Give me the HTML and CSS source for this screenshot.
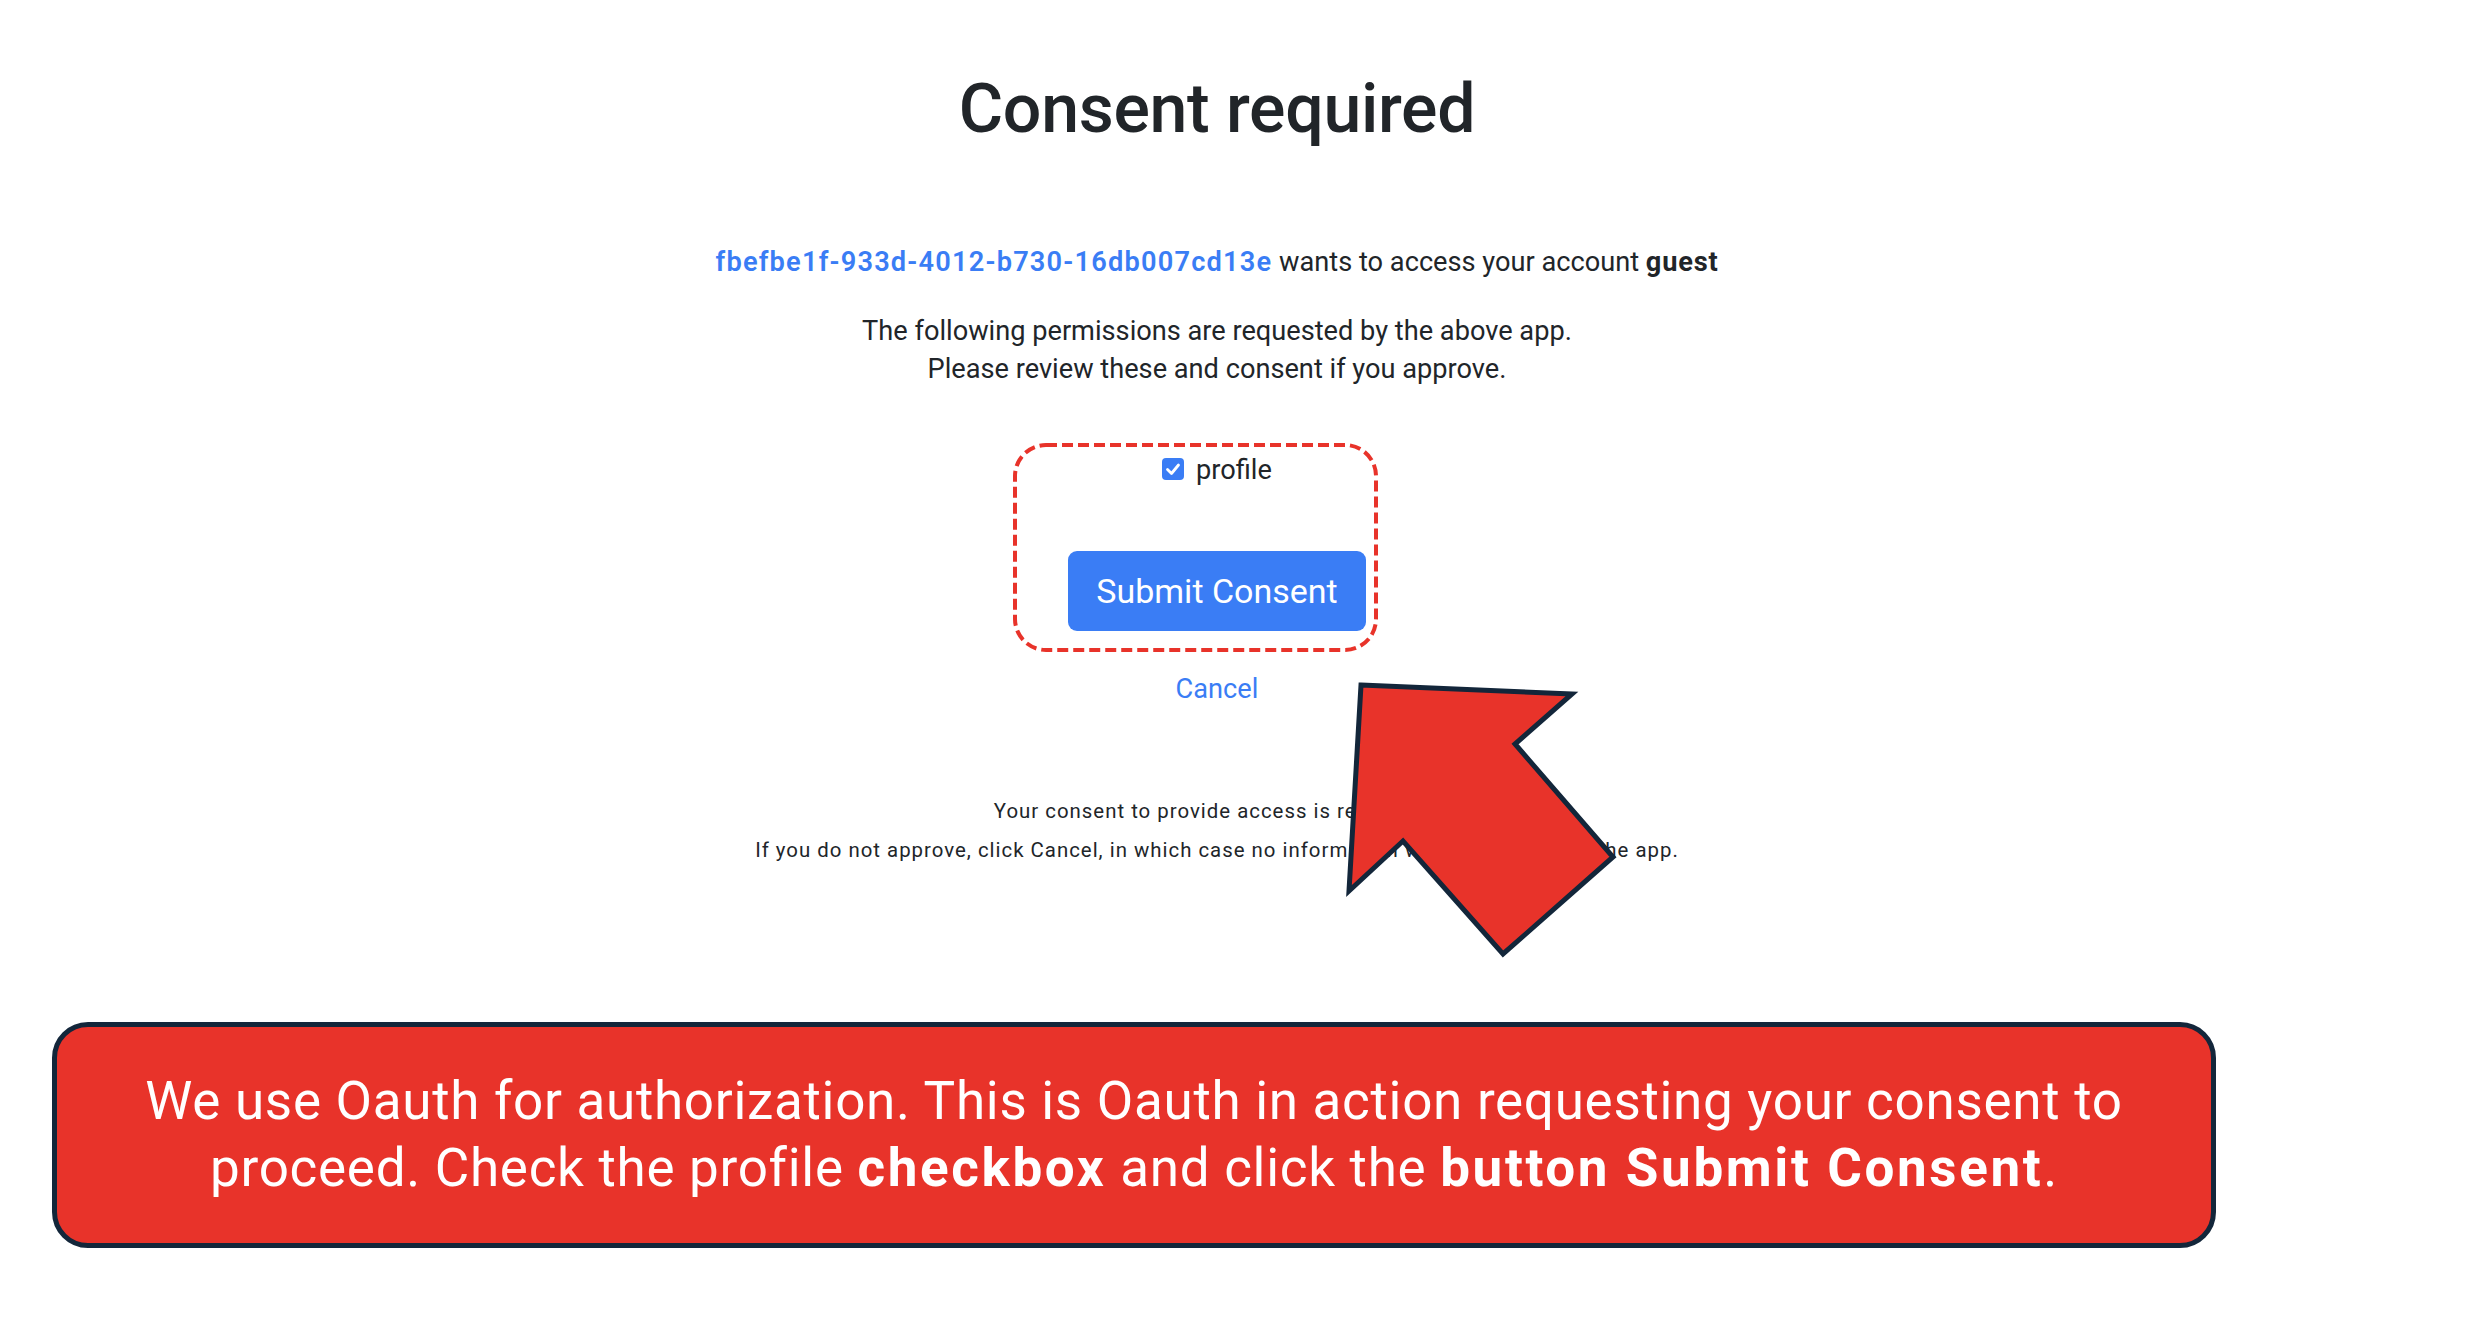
FILE: index.html
```html
<!DOCTYPE html>
<html lang="en">
<head>
<meta charset="utf-8">
<title>Consent required</title>
<link rel="stylesheet" href="styles.css">
</head>
<body>
<main class="page">
  <h1 class="title">Consent required</h1>
  <p class="client"><a class="client-id" href="#">fbefbe1f-933d-4012-b730-16db007cd13e</a> wants to access your account <strong>guest</strong></p>
  <p class="intro">The following permissions are requested by the above app.<br>Please review these and consent if you approve.</p>
  <form class="consent-form">
    <label class="scope">
      <span class="check" role="checkbox" aria-checked="true">
        <svg viewBox="0 0 22 22" width="22" height="22"><polyline points="5.5,11.5 9.5,15.5 16.5,7" fill="none" stroke="#fff" stroke-width="2.8" stroke-linecap="round" stroke-linejoin="round"/></svg>
      </span>
      <span class="scope-name">profile</span>
    </label>
    <button class="btn-submit" type="button">Submit Consent</button>
    <a class="cancel" href="#">Cancel</a>
  </form>
  <p class="note">Your consent to provide access is revocable.<br>If you do not approve, click Cancel, in which case no information will be shared with the app.</p>
</main>
<div class="banner">
  <p class="banner-text">We use Oauth for authorization. This is Oauth in action requesting your consent to<br>proceed. Check the profile <strong>checkbox</strong> and click the <strong>button Submit Consent</strong>.</p>
</div>
<svg class="overlay" width="2484" height="1320" viewBox="0 0 2484 1320" aria-hidden="true">
  <rect x="1015" y="445" width="361" height="205" rx="31" ry="31" fill="none" stroke="#e8332a" stroke-width="4" stroke-dasharray="11 5"/>
  <polygon points="1361,685 1572,694 1515,744 1613,857 1503,954 1403,841 1349,891" fill="#e8332a" stroke="#13263a" stroke-width="5" stroke-linejoin="miter"/>
</svg>
</body>
</html>
```
FILE: styles.css
```css
* { box-sizing: border-box; }

html, body {
  margin: 0;
  padding: 0;
  background: #ffffff;
}

body {
  position: relative;
  width: 2484px;
  height: 1320px;
  overflow: hidden;
  font-family: Roboto, "Liberation Sans", Arial, sans-serif;
  color: #212529;
}

.page {
  width: 2434px;
  display: flex;
  flex-direction: column;
  align-items: center;
  text-align: center;
}

.title {
  margin: 69px 0 0;
  font-size: 68px;
  line-height: 81.6px;
  font-weight: 500;
  letter-spacing: -0.3px;
}

.client {
  margin: 91.7px 0 0;
  font-size: 27.2px;
  line-height: 40.8px;
}

.client-id {
  color: #3a7df5;
  font-weight: 600;
  letter-spacing: 1.2px;
  text-decoration: none;
}

.client strong {
  font-weight: 700;
  letter-spacing: 0.8px;
}

.intro {
  margin: 28.6px 0 0;
  font-size: 27.2px;
  line-height: 38px;
}

.consent-form {
  display: flex;
  flex-direction: column;
  align-items: center;
}

.scope {
  margin-top: 62.6px;
  display: flex;
  align-items: flex-start;
  gap: 12px;
  font-size: 27.2px;
  line-height: 40.8px;
}

.check {
  margin-top: 7.7px;
  width: 22px;
  height: 22px;
  border-radius: 4px;
  background: #3a7df5;
  display: flex;
}

.btn-submit {
  margin-top: 59.9px;
  height: 80px;
  padding: 0 28px;
  border: 0;
  border-radius: 9px;
  background: #3a7df5;
  color: #ffffff;
  font-family: inherit;
  font-size: 34px;
  line-height: 80px;
}

.cancel {
  margin-top: 38.3px;
  font-size: 27.2px;
  line-height: 40.8px;
  color: #3a7df5;
  text-decoration: none;
}

.note {
  margin: 82.4px 0 0;
  font-size: 20.4px;
  line-height: 39px;
  letter-spacing: 1px;
}

.banner {
  margin: 151.5px 0 0 52px;
  width: 2164px;
  height: 226px;
  background: #e8332a;
  border: 5px solid #13263a;
  border-radius: 36px;
  padding-top: 41px;
}

.banner-text {
  margin: 0;
  color: #ffffff;
  text-align: center;
  font-size: 53px;
  line-height: 67px;
  letter-spacing: 0.7px;
}

.banner-text strong {
  font-weight: 700;
  letter-spacing: 2.6px;
}

.overlay {
  position: absolute;
  left: 0;
  top: 0;
  pointer-events: none;
}
```
